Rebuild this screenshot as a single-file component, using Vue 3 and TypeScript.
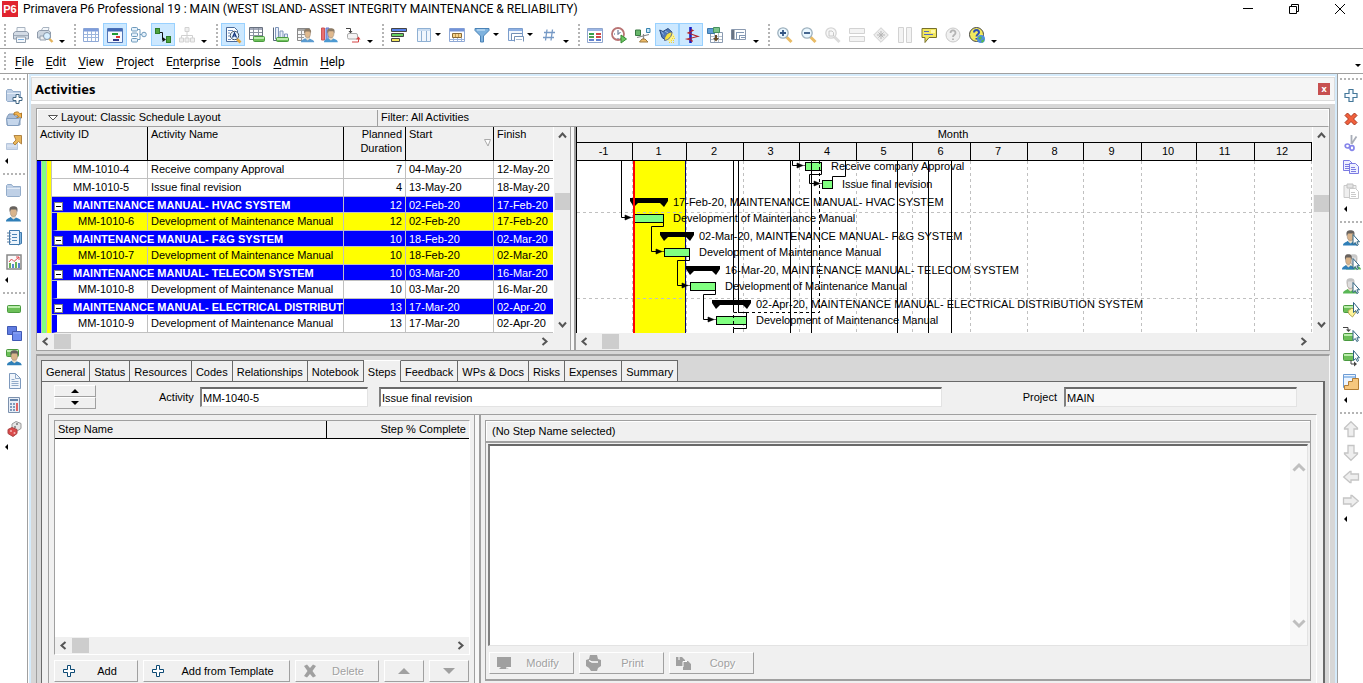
<script setup lang="ts">
import { ref } from 'vue'

interface Tool { icon: string; label: string; active?: boolean; disabled?: boolean; menu?: boolean }
interface Row { kind: 'task' | 'group'; id?: string; name: string; dur: number; start: string; finish: string; indent?: boolean; hot?: boolean }

const cursor = '<path d="M10 4.500v10l2.300-2 1.500 3 1.500-.8-1.400-2.900h2.600z" fill="#fff" stroke="#2f6380"/>'
const cursorHigh = '<path d="M10.500 .5v10l2.300-2 1.500 3 1.200-.8-1.200-2.900h2.200z" fill="#fff" stroke="#2f6380"/>'
const person = (x: number, y: number, hair: string, skin: string, shirt: string) =>
  `<g transform="translate(${x} ${y})"><path d="M0 15.500c0-3 3-3 4.500-4.500h5c1.500 1.500 5.500 1.500 5.500 4.500z" fill="${shirt}"/><path d="M5.500 9h4l.8 2.500-2.800 2-2.500-2z" fill="#e8dcc8"/><ellipse cx="7.500" cy="6" rx="3.300" ry="4.500" fill="${skin}" stroke="#8d7f74" stroke-width=".5"/><path d="M3.800 6C2.500 1 5 .3 7.500.3S12.500 1 11.200 6l-1-2.500H5z" fill="${hair}"/></g>`
const green = (x: number, y: number, w: number, h: number) =>
  `<rect x="${x + 0.5}" y="${y + 0.5}" width="${w - 1}" height="${h - 1}" rx="1" fill="#6cbf58" stroke="#4a9a3f"/><path d="M${x + 1} ${y + 2}h${w - 2}" stroke="#b9ecaa" stroke-width="2"/>`
const folder = '<path d="M.5 3.500l1-1h4l1.500 2h7.500v9l-1 1h-12l-1-1z" fill="#bfd0e6" stroke="#93acca"/><path d="M1 6.500h13" stroke="#e2ebf6"/>'
const magnifier = (rim: string, glass: string, handle: string) =>
  `<path d="M9.500 10l5 5" stroke="${handle}" stroke-width="3"/><circle cx="6" cy="6" r="5.200" fill="${glass}" stroke="${rim}" stroke-width="1.300"/>`
const sheet = (x: number, y: number, line: string, fill: string) =>
  `<path d="M${x}.5 ${y}.5h6l3 3v7h-9z" fill="${fill}" stroke="${line}"/><path d="M${x + 2} ${y + 4}.5h4M${x + 2} ${y + 6}.5h5M${x + 2} ${y + 8}.5h5" stroke="${line}"/>`

const icons: Record<string, string> = {
  print: '<path d="M4 5V.5h8V5" fill="#f5f8fb" stroke="#a9b4c1"/><path d="M.5 6l2-1.500h11l2 1.500v6h-15z" fill="#d3dbe5" stroke="#8f9bab"/><path d="M1 8.500h14" stroke="#9fabb9"/><path d="M3.500 10h9v5.500h-9z" fill="#f4f8fc" stroke="#93a0ae"/><path d="M5 12.500h6" stroke="#7cb0e4"/>',
  preview: '<path d="M4 4L6 .5h6L11 5" fill="#f5f8fb" stroke="#a9b4c1"/><path d="M.5 5l2-1.500h9l2 1.500v6h-13z" fill="#ccd5df" stroke="#8f9bab"/><path d="M3 9h6v4H3z" fill="#eee" stroke="#93a0ae"/><path d="M12 11.500l3.500 3.500" stroke="#e4b45e" stroke-width="2.400"/><circle cx="10" cy="9" r="3.500" fill="#d8efff" stroke="#8594a5"/>',
  table: '<path d="M.5 1.500h15v13H.5z" fill="#fff" stroke="#8fa9d6"/><path d="M1 3h14" stroke="#7f9ddb" stroke-width="3"/><path d="M1 7.500h14M1 10.500h14M4.500 4v10M8.500 4v10M12.500 4v10" stroke="#9db6dd"/>',
  gantt: '<path d="M.5 1.500h15v14H.5z" fill="#f4f8ff" stroke="#5176b8"/><path d="M1 3h14" stroke="#4168b4" stroke-width="3"/><path d="M5 7h6" stroke="#1f9a31" stroke-width="2"/><path d="M9 10h4" stroke="#d33" stroke-width="2"/><path d="M6 13h6" stroke="#333b86" stroke-width="2"/>',
  tree: '<path d="M6 2.500h3v10H6M9 7.500h3" fill="none" stroke="#6e9abc"/><rect x=".5" y=".5" width="6" height="3.500" rx="1" fill="#e5f1fb" stroke="#6e9abc"/><rect x=".5" y="6" width="6" height="3.500" rx="1" fill="#e5f1fb" stroke="#6e9abc"/><rect x=".5" y="11.500" width="6" height="3.500" rx="1" fill="#e5f1fb" stroke="#6e9abc"/><circle cx="13" cy="7.500" r="2.300" fill="#e5f1fb" stroke="#6e9abc"/>',
  network: '<rect x=".5" y="1.500" width="4" height="5" fill="#4fa33c" stroke="#2e7d2a"/><rect x="11.500" y="9.500" width="4" height="6" fill="#4fa33c" stroke="#2e7d2a"/><path d="M5 5.500h2.500v7H9" fill="none" stroke="#111"/><path d="M7.500 10l3.500 2.500L7.500 15z" fill="#111"/>',
  org: '<path d="M8 5v4M2.500 11V8.500h11V11M8 8v3" fill="none" stroke="#d0d0d0"/><path d="M6 .5h4v4H6zM.5 11h4v4h-4zM6 11h4v4H6zM11.500 11h4v4h-4z" fill="#efefef" stroke="#d2d2d2"/>',
  find: '<path d="M1.500.5h8l3 3v11h-11z" fill="#fff" stroke="#4a6a9a"/><path d="M3 3.500h5M3 12.500h3M3 6h2M3 9h2" stroke="#6e8fc0"/><path d="M11.500 11.500l4 4" stroke="#e3a63c" stroke-width="2.600"/><circle cx="9.500" cy="8.500" r="4.200" fill="#e8f6ff" stroke="#456"/><path d="M7.500 10.500l2-4.500 2 4.500M8.300 9h2.400" fill="none" stroke="#11337a" stroke-width="1.200"/>',
  tableBar: '<path d="M.5.500h13v12H.5z" fill="#fff" stroke="#687180"/><path d="M1 2h12" stroke="#a5abbb" stroke-width="2"/><path d="M1 5.500h12M1 8.500h12M4.500 1v11M9.500 1v11" stroke="#8a92a0"/>' + green(4, 9, 12, 6),
  chartBar: '<path d="M2.500.5h3V12h-3zM7 4h3v8H7zM11.500 7h3v5h-3z" fill="#e9effa" stroke="#7f96bb"/><path d="M.5.500v13H4" fill="none" stroke="#56667c"/>' + green(3, 10, 13, 5),
  tablePerson: '<path d="M.5 1.500h12v12H.5z" fill="#f8f8f8" stroke="#888"/><path d="M1 3h11" stroke="#a6a6a6" stroke-width="2"/><path d="M4.500 4v9M1 7.500h7M1 10.500h6" stroke="#999"/><g transform="translate(4 1.500) scale(.88)">' + person(0, 0, '#8c7a64', '#dfb98e', '#5b9bd0') + '</g>',
  chartPerson: '<path d="M.5 1h3v12h-3z" fill="#e87070" stroke="#c55"/><path d="M5 1h3v12H5z" fill="#8ba7e8" stroke="#67c"/><g transform="translate(3 1) scale(.92)">' + person(0, 0, '#8c7a64', '#dfb98e', '#4d9ad2') + '</g>',
  trace: '<path d="M1 1.500h4.500V5" fill="none" stroke="#444"/><path d="M3.500 4h4L5.500 6.500z" fill="#444"/><rect x="2.500" y="6.500" width="10" height="5.500" rx="1.500" fill="#f4f4f4" stroke="#aaa"/><path d="M7 15h6.500V11" fill="none" stroke="#d54545"/><path d="M11 12.500h4.500L13.500 9.500z" fill="#d54545"/>',
  bars: '<path d="M.5 1.500h15v3H.5z" fill="#5580e8" stroke="#444"/><path d="M.5 6.500h12v3H.5z" fill="#65cf60" stroke="#444"/><path d="M.5 11.500h8v3h-8z" fill="#f3e65d" stroke="#444"/>',
  columns: '<path d="M1.500 1.500h13v13h-13z" fill="#f0f6fd" stroke="#8fb0d3"/><path d="M5.500 2v12M10.500 2v12" stroke="#8fb0d3"/><path d="M2 3h12" stroke="#c9dcf1" stroke-width="2"/>',
  timescale: '<path d="M.5 1.500h15v13H.5z" fill="#fff" stroke="#8fa9d6"/><path d="M1 3h14" stroke="#7393d8" stroke-width="3"/><path d="M1 12.500h14M4.500 11v3M8.500 11v3M12.500 11v3" stroke="#9db6dd"/><path d="M3.500 6.500h9v4h-9z" fill="#f7d48b" stroke="#8a6b37"/><path d="M6.500 7v3M9.500 7v3" stroke="#c79a50"/>',
  filter: '<path d="M1 1.500h14v2L9.500 9v6h-3V9L1 3.500z" fill="#7eb2de" stroke="#4a82b6"/><path d="M3 3h8" stroke="#d4e9fa"/>',
  layout: '<path d="M.5 1.500h14v12H.5z" fill="#f2f7fd" stroke="#7b9dcc"/><path d="M1 3h13" stroke="#8db0e4" stroke-width="2"/><path d="M3.500 13V6.500H14M6.500 14.500v-5h9v5" fill="#fff" stroke="#7390b5"/><path d="M8 12.500h6" stroke="#a8bad2"/>',
  hash: '<path d="M6 2.500l-1.500 11M11.500 2.500l-1.500 11M3 5.500h11M2 10.500h11" stroke="#7699c5" fill="none" stroke-width="1.300"/>',
  sheetGrid: '<path d="M.5 1.500h15v14H.5z" fill="#fff" stroke="#8fa6cd"/><path d="M1 3h14" stroke="#9db7e6" stroke-width="2"/><path d="M2 7h5" stroke="#38a04a" stroke-width="2"/><path d="M9 7h5M9 10h5" stroke="#d04848" stroke-width="2"/><path d="M2 10h5" stroke="#4c9f51" stroke-width="2"/><path d="M2 13h5M9 13h5" stroke="#6483cf" stroke-width="2"/>',
  clock: '<circle cx="7" cy="7" r="6" fill="#fff" stroke="#b97474" stroke-width="1.800"/><path d="M7 3v4.500l2.500-2.500M3 7h1M7 11v1" stroke="#4c6284" fill="none"/><path d="M10 8l5.500 4-5.500 4z" fill="#6bc662" stroke="#368b35"/>',
  balance: '<path d="M.5 3h5v5.500h-5z" fill="#68b66a" stroke="#387942"/><path d="M11.500 1.500h3.500v4h-3.500z" fill="#c8e8fa" stroke="#3984b1"/><path d="M2 10.500l12-3M8.500 7v5" stroke="#888" stroke-width="1.200"/><path d="M4.500 15l2.500-3h3l3 3z" fill="#f0bd68" stroke="#9c783e"/>',
  spotlight: '<path d="M6 12l7-7 3 5-4 5.500z" fill="#fff38a"/><path d="M10 15.500h5M12 13.500h4M13 11.500h3M14 9.500h2" stroke="#ecd341" stroke-dasharray="1 1"/><path d="M.7 3L4 4.500 9 1.500l4 3.500-7 7.500-3-2z" fill="#4f79b8" stroke="#28497e"/><path d="M2.500 4.500l2 3M6 4l3 2" stroke="#9dbbe6"/><path d="M5.500 13.500c-.5-4 3-8.500 7.500-8.500 0 4-3 8-7.500 8.500z" fill="#f6e03c" stroke="#5a6d96"/>',
  progress: '<path d="M7.500 0v16" stroke="#1a1fc4" stroke-width="2.600"/><path d="M8 2.500l2 1-5 2.500 10 3.500-11 2.500 5 1.500v1.500" fill="none" stroke="#b3242c" stroke-width="1.100"/>',
  download: '<path d="M3.500 5.500h12v10h-12z" fill="#fff" stroke="#8a9ab0"/><path d="M4 9.500h11M4 12.500h11M7.500 6v9M11.500 6v9" stroke="#b4bfcc"/><path d="M.5 1.500h7v5h-7z" fill="#5e9dd6" stroke="#3e77aa"/><path d="M6.500.5h6v5h-6z" fill="#7cc48a" stroke="#46905f"/><path d="M9 8v4" stroke="#664b25" stroke-width="2"/><path d="M6 11h6l-3 3.500z" fill="#664b25"/>',
  bookmark: '<path d="M.5 2.500h14v10H.5z" fill="#fff" stroke="#8b9ab0"/><path d="M2 3v9" stroke="#687383" stroke-width="3"/><path d="M5 5.500h8M5.500 6v6M8 8.500h6M8.500 9v3M10 10.500h4" fill="none" stroke="#8398b4"/>',
  zoomIn: magnifier('#9db0bd', '#eaf7ff', '#e9bb65') + '<path d="M3 6h6M6 3v6" stroke="#345684" stroke-width="1.800"/>',
  zoomOut: magnifier('#9db0bd', '#eaf7ff', '#e9bb65') + '<path d="M3 6h6" stroke="#345684" stroke-width="1.800"/>',
  zoomFit: magnifier('#d5d5d5', '#f7f7f7', '#dcdcdc') + '<path d="M4 4h3l1.500 1.500V9H4z" fill="none" stroke="#c8c8c8"/>',
  splitH: '<path d="M.5 1.500h15v5H.5zM.5 9.500h15v5H.5z" fill="#f3f3f3" stroke="#d2d2d2"/>',
  focus: '<path d="M8 .7L15.300 8 8 15.300.7 8z" fill="#ececec" stroke="#d0d0d0"/><path d="M8 4v8M4 8h8M5.500 5.500l5 5M10.500 5.500l-5 5" stroke="#b6b6b6"/>',
  splitV: '<path d="M1.500.5h5v15h-5zM9.500.5h5v15h-5z" fill="#f3f3f3" stroke="#d2d2d2"/>',
  comment: '<path d="M1 1.500h14.500v9H8l-4 5v-5H1z" fill="#f2e75d" stroke="#77702b"/><path d="M3 4.500h5M3 7.500h9" stroke="#5569c4"/><path d="M10 3h4v3h-4z" fill="#fff8a8"/>',
  helpOff: '<circle cx="8" cy="8" r="7" fill="#f0f0f0" stroke="#cacaca"/><path d="M5.500 6c0-3.500 5-3.500 5 0C10.500 8 8 7.500 8 10M8 11.500V13" fill="none" stroke="#b4b4b4" stroke-width="1.800"/>',
  help: '<circle cx="7.500" cy="7.500" r="7" fill="#f3e95e" stroke="#444"/><path d="M5 5.500c0-3.500 5-3.500 5 0C10 7.500 7.500 7 7.500 9.500M7.500 11v1.500" fill="none" stroke="#2e4fb8" stroke-width="2"/><circle cx="12" cy="12" r="4" fill="#4f8fdf"/><path d="M9 11l3-2 1 2-2 2zM12 14l3-2v2l-2 2z" fill="#57bb4c"/>',
  folderAdd: folder + '<path d="M10 7.500h3v3h3v3h-3v3h-3v-3H7v-3h3z" fill="#fff" stroke="#426783"/>',
  folderOpen: '<path d="M1 6L3 3h5l1 2h5v9H1z" fill="#a9bdd8" stroke="#829bba"/><path d="M8 2c3-2 5-1 6 1l1.500-1v5h-5l2-1.500C11 3.500 10 3.500 8 4z" fill="#f5b54d" stroke="#b27a29"/><path d="M.5 7.500h11l3-1-2 8H1.500z" fill="#c5d6eb" stroke="#819dbf"/>',
  folderClose: '<path d="M.5 8.500h11v6H.5z" fill="#ccd8ea" stroke="#b6c6dc"/><path d="M1 11h10" stroke="#e4ecf6"/><path d="M8 .5h7.500V9l-3-2.500L9 10l-2-2 3-3z" fill="#e8b65a" stroke="#b28545"/>',
  folder,
  user: person(0, 0, '#67625e', '#d9b48b', '#2f7fb8'),
  book: '<path d="M12 2.500h3.500v11L12 15" fill="#82b7e1" stroke="#3f79ac"/><path d="M3.500.5h10v14h-10z" fill="#edf5fc" stroke="#3f79ac"/><path d="M6 4.500h5M6 7.500h5M6 10.500h5" stroke="#4b84b7"/><path d="M1 3h4M1 6h4M1 9h4M1 12h4" stroke="#56799d"/>',
  report: '<path d="M1 1h14v14H1z" fill="#fafafa" stroke="#888" stroke-width="1.500"/><path d="M3 8l2.500-3L8 7.500 13 3M10 3h3v3" fill="none" stroke="#df4c50"/><path d="M4 9v5M10 8v6" stroke="#67b454" stroke-width="2"/><path d="M7 10v4M13 9v5" stroke="#5887cb" stroke-width="2"/>',
  task: green(1, 4, 14, 8),
  windows: '<path d="M1.500 1.500h9v8h-9z" fill="#5f7be0" stroke="#4059b3"/><path d="M6.500 6.500h9v9h-9z" fill="#6f8df0" stroke="#4059b3"/><path d="M7 8h8" stroke="#93a9f5"/>',
  taskUser: green(0, 0, 13, 8) + '<g transform="translate(1 1) scale(.98)">' + person(0, 0, '#67625e', '#d9b48b', '#2f7fb8') + '</g>',
  document: '<path d="M3.500.5h6l5 5v10h-11z" fill="#f0f5fb" stroke="#7d99bd"/><path d="M9.500.5v5h5M5.500 6.500h3M5.500 8.500h7M5.500 10.500h7M5.500 12.500h7" fill="none" stroke="#91aac9"/>',
  calc: '<path d="M2.500.5h11v15h-11z" fill="#e7eef7" stroke="#7b90ad"/><path d="M4 3h8" stroke="#6684aa" stroke-width="2"/><path d="M4 7h5M4 10h5M4 13h5" stroke="#7f9abb" stroke-width="2" stroke-dasharray="2 1"/><path d="M11 6v8" stroke="#e16262" stroke-width="2"/>',
  risk: '<path d="M6 3l4-2.500 5 2v5l-4 2.500-5-2z" fill="#e5e5e5" stroke="#999"/><circle cx="11" cy="3" r="1" fill="#777"/><circle cx="9" cy="6" r="1" fill="#777"/><path d="M2 8.500l4-2 5 2v4l-4 3-5-3z" fill="#da4b4b" stroke="#a94343"/><circle cx="5" cy="10" r="1" fill="#f3b5b5"/><circle cx="8.500" cy="12" r="1" fill="#f3b5b5"/>',
  plus: '<path d="M6 2.500h4v4h4v4h-4v4H6v-4H2v-4h4z" fill="#f7fbff" stroke="#447799" stroke-width="1.200"/>',
  cross: '<path d="M2 4.500L4.500 2 8 5.500 11.500 2 14 4.500 10.500 8l3.500 3.500-2.500 2.500L8 10.500 4.500 14 2 11.500 5.500 8z" fill="#f2603c" stroke="#a9361d"/>',
  scissors: '<path d="M8.500 0v9M13.500 1.500L8.500 9" stroke="#a9aeb8" stroke-width="1.800"/><ellipse cx="4.500" cy="11" rx="2.300" ry="2" fill="none" stroke="#8585ea" stroke-width="1.700"/><ellipse cx="9" cy="13" rx="2" ry="2.300" fill="none" stroke="#8585ea" stroke-width="1.700"/>',
  copy: sheet(0, 1, '#7b7be2', '#eef0ff') + sheet(6, 4, '#7b7be2', '#eef0ff'),
  paste: '<path d="M1 2.500h12v12H1z" fill="#efefef" stroke="#cacaca"/><path d="M4 1h6v4H4z" fill="#e3e3e3" stroke="#c2c2c2"/>' + sheet(6, 5, '#cacaca', '#fff'),
  pickUser: person(0, 0, '#67625e', '#d9b48b', '#2f7fb8') + cursor,
  pickUsers: '<g transform="translate(3 0)">' + person(0, 0, '#c9c9c9', '#ddd', '#59b756') + '</g><g transform="translate(-1 0) scale(.85 1)">' + person(0, 0, '#67625e', '#d9b48b', '#2f7fb8') + '</g>' + cursor,
  pickRole: person(0, 0, '#c3c3c3', '#dedede', '#59b756') + cursor,
  pickCode: green(0, 3, 11, 8) + '<path d="M5 9l4-3 4 4-3.500 5L6 12z" fill="#fff59a" stroke="#b5a957"/>' + cursorHigh,
  pickPred: '<path d="M0 1.500h5V4" fill="none" stroke="#444"/><path d="M3 3.500h5L5.500 6z" fill="#444"/>' + green(0, 7, 11, 8) + cursor,
  pickSucc: green(0, 3, 11, 8) + '<path d="M8 10v4h4" fill="none" stroke="#444"/><path d="M11 11.500l3 2.500-3 2.500z" fill="#444"/>' + cursorHigh,
  steps: '<path d="M.5.500h12v13H.5z" fill="#edf5ff" stroke="#6d9bd3"/><path d="M1 3h11" stroke="#9dc3ed" stroke-width="2"/><path d="M1.500 15.500v-4h4v-4h4v-3h6v11z" fill="#f6c77e" stroke="#b27d35"/>',
  up: '<path d="M8 .7L14.500 7v1H11v7.500H5V8H1.500V7z" fill="#eee" stroke="#c5c5c5" stroke-width="1.300"/>',
  down: '<path d="M8 15.300L14.500 9V8H11V.5H5V8H1.500v1z" fill="#eee" stroke="#c5c5c5" stroke-width="1.300"/>',
  left: '<path d="M.7 8L7 2.500h1V5h7.500v6H8v2.500H7z" fill="#eee" stroke="#c5c5c5" stroke-width="1.300"/>',
  right: '<path d="M15.300 8L9 2.500H8V5H.5v6H8v2.500h1z" fill="#eee" stroke="#c5c5c5" stroke-width="1.300"/>',
  addBtn: '<path d="M6.500 2.500h3v4h4v3h-4v4h-3v-4h-4v-3h4z" fill="#fff" stroke="#0d4a75"/>',
  deleteBtn: '<path d="M2 3l3-1.500L8 5l3-3.500L14 3l-3.500 5 3.500 5-3 1.500L8 11l-3 3.500L2 13l3.500-5z" fill="#a0a0a0"/>',
  modifyBtn: '<path d="M1 2h14v10H10l3 2H3l2-2H1z" fill="#a0a0a0"/><path d="M10 13h5" stroke="#fff"/>',
  printBtn: '<path d="M4 0h7l1 4 3 1v6l-3 2-1 3H5l-2-3-3-2V5l3-1z" fill="#a0a0a0"/><path d="M3 5.500l3 1.500h6" stroke="#fff" fill="none" stroke-width="1.300"/>',
  copyBtn: '<path d="M0 2h6l3 3v6H0zM7 6h5l3 3v6H7z" fill="#a0a0a0"/><path d="M7 12V6.500h4M3 2v3" stroke="#fff" fill="none"/>',
}

const toolbars: Tool[][] = [
  [{ icon: 'print', label: 'Print' }, { icon: 'preview', label: 'Print Preview' }],
  [{ icon: 'table', label: 'Activity Table' }, { icon: 'gantt', label: 'Gantt Chart', active: true }, { icon: 'tree', label: 'Activity Usage' }, { icon: 'network', label: 'Relationship Lines', active: true }, { icon: 'org', label: 'WBS', disabled: true }],
  [{ icon: 'find', label: 'Details', active: true }, { icon: 'tableBar', label: 'Activity Usage Spreadsheet' }, { icon: 'chartBar', label: 'Activity Usage Profile' }, { icon: 'tablePerson', label: 'Resource Usage Spreadsheet' }, { icon: 'chartPerson', label: 'Resource Usage Profile' }, { icon: 'trace', label: 'Trace Logic' }],
  [{ icon: 'bars', label: 'Bars' }, { icon: 'columns', label: 'Columns', menu: true }, { icon: 'timescale', label: 'Timescale' }, { icon: 'filter', label: 'Filters', menu: true }, { icon: 'layout', label: 'Group and Sort', menu: true }, { icon: 'hash', label: 'Renumber' }],
  [{ icon: 'sheetGrid', label: 'Spreadsheet' }, { icon: 'clock', label: 'Schedule' }, { icon: 'balance', label: 'Level Resources' }, { icon: 'spotlight', label: 'Progress Spotlight', active: true }, { icon: 'progress', label: 'Progress Line', active: true }, { icon: 'download', label: 'Store Period Performance' }, { icon: 'bookmark', label: 'Layouts' }],
  [{ icon: 'zoomIn', label: 'Zoom In' }, { icon: 'zoomOut', label: 'Zoom Out' }, { icon: 'zoomFit', label: 'Zoom to Fit', disabled: true }, { icon: 'splitH', label: 'Split Horizontally', disabled: true }, { icon: 'focus', label: 'Focus', disabled: true }, { icon: 'splitV', label: 'Split Vertically', disabled: true }, { icon: 'comment', label: 'Comments' }, { icon: 'helpOff', label: 'Context Help', disabled: true }, { icon: 'help', label: 'Online Help' }],
]
const leftBars: string[][] = [
  ['folderAdd', 'folderOpen', 'folderClose'],
  ['folder', 'user', 'book', 'report'],
  ['task', 'windows', 'taskUser', 'document', 'calc', 'risk'],
]
const rightBars: string[][] = [
  ['plus', 'cross', 'scissors', 'copy', 'paste'],
  ['pickUser', 'pickUsers', 'pickRole', 'pickCode', 'pickPred', 'pickSucc', 'steps'],
  ['up', 'down', 'left', 'right'],
]
const menus = ['File', 'Edit', 'View', 'Project', 'Enterprise', 'Tools', 'Admin', 'Help']
const accel: Record<string, number> = { Enterprise: 1 }

const rows: Row[] = [
  { kind: 'task', id: 'MM-1010-4', name: 'Receive company Approval', dur: 7, start: '04-May-20', finish: '12-May-20' },
  { kind: 'task', id: 'MM-1010-5', name: 'Issue final revision', dur: 4, start: '13-May-20', finish: '18-May-20' },
  { kind: 'group', name: 'MAINTENANCE MANUAL- HVAC SYSTEM', dur: 12, start: '02-Feb-20', finish: '17-Feb-20' },
  { kind: 'task', id: 'MM-1010-6', name: 'Development of Maintenance Manual', dur: 12, start: '02-Feb-20', finish: '17-Feb-20', indent: true, hot: true },
  { kind: 'group', name: 'MAINTENANCE MANUAL- F&G SYSTEM', dur: 10, start: '18-Feb-20', finish: '02-Mar-20' },
  { kind: 'task', id: 'MM-1010-7', name: 'Development of Maintenance Manual', dur: 10, start: '18-Feb-20', finish: '02-Mar-20', indent: true, hot: true },
  { kind: 'group', name: 'MAINTENANCE MANUAL- TELECOM SYSTEM', dur: 10, start: '03-Mar-20', finish: '16-Mar-20' },
  { kind: 'task', id: 'MM-1010-8', name: 'Development of Maintenance Manual', dur: 10, start: '03-Mar-20', finish: '16-Mar-20', indent: true },
  { kind: 'group', name: 'MAINTENANCE MANUAL- ELECTRICAL DISTRIBUTION SYSTEM', dur: 13, start: '17-Mar-20', finish: '02-Apr-20' },
  { kind: 'task', id: 'MM-1010-9', name: 'Development of Maintenance Manual', dur: 13, start: '17-Mar-20', finish: '02-Apr-20', indent: true },
]

/* Chart geometry: x runs along the time axis from the left edge of the chart, y from its top. */
const months = [
  { label: '-1', w: 56 }, { label: '1', w: 54 }, { label: '2', w: 57 }, { label: '3', w: 56 }, { label: '4', w: 57 },
  { label: '5', w: 56 }, { label: '6', w: 58 }, { label: '7', w: 57 }, { label: '8', w: 56 }, { label: '9', w: 58 },
  { label: '10', w: 55 }, { label: '11', w: 58 }, { label: '12', w: 57 },
]
const gridX = months.map((_, i) => months.slice(0, i + 1).reduce((s, m) => s + m.w, 0) - 1)
const bars = [
  { x: 228, y: 1, w: 17 }, { x: 245, y: 19, w: 11 }, { x: 57, y: 53, w: 30 },
  { x: 87, y: 87, w: 26 }, { x: 113, y: 121, w: 26 }, { x: 139, y: 155, w: 31 },
]
const summaries = [
  { x: 53, y: 37, w: 38 }, { x: 83, y: 71, w: 34 }, { x: 109, y: 105, w: 34 }, { x: 135, y: 139, w: 39 },
]
const barLabels = [
  { x: 254, y: 9, t: 'Receive company Approval' }, { x: 265, y: 27, t: 'Issue final revision' },
  { x: 96, y: 45, t: '17-Feb-20, MAINTENANCE MANUAL- HVAC SYSTEM' }, { x: 96, y: 61, t: 'Development of Maintenance Manual' },
  { x: 122, y: 79, t: '02-Mar-20, MAINTENANCE MANUAL- F&G SYSTEM' }, { x: 122, y: 95, t: 'Development of Maintenance Manual' },
  { x: 148, y: 113, t: '16-Mar-20, MAINTENANCE MANUAL- TELECOM SYSTEM' }, { x: 148, y: 129, t: 'Development of Maintenance Manual' },
  { x: 179, y: 147, t: '02-Apr-20, MAINTENANCE MANUAL- ELECTRICAL DISTRIBUTION SYSTEM' }, { x: 179, y: 163, t: 'Development of Maintenance Manual' },
]
const links = [
  'M44.500 0V56.500H50', 'M86.500 62V65.500H74.500V90.500H80', 'M112.500 96V99.500H100.500V124.500H106', 'M138.500 130V133.500H126.500V158.500H132',
  'M169.500 164V167.500H156.500V172', 'M156.500 0V151.500', 'M161.500 0V151.500M169.500 155V151.500H161', 'M213.500 0V172', 'M234.500 0V172',
  'M320.500 0V172', 'M351.500 0V172', 'M374.500 0V172', 'M215.500 0V4.500H221', 'M244.500 10V13.500H232.500V22.500H238', 'M268.500 0V15.500H255.500V19',
]
const arrows = [[56, 56.5], [87, 90.5], [113, 124.5], [139, 158.5], [228, 4.5], [245, 22.5]]

const tabs = ['General', 'Status', 'Resources', 'Codes', 'Relationships', 'Notebook', 'Steps', 'Feedback', 'WPs & Docs', 'Risks', 'Expenses', 'Summary']
const activeTab = ref('Steps')
const activityId = ref('MM-1040-5')
const activityName = ref('Issue final revision')
const project = ref('MAIN')
const stepText = ref('')
</script>

<template>
  <div class="app">
    <header class="titlebar">
      <span class="logo">P6</span>
      <span class="title">Primavera P6 Professional 19 : MAIN (WEST ISLAND- ASSET INTEGRITY MAINTENANCE &amp; RELIABILITY)</span>
      <div class="winbtns">
        <button aria-label="Minimize"><svg width="12" height="12"><path d="M1 5.500h10" stroke="#000" /></svg></button>
        <button aria-label="Restore"><svg width="12" height="12"><path d="M1.500 3.500h7v7h-7zM3.500 3V1.500h7v7H9" fill="none" stroke="#000" /></svg></button>
        <button aria-label="Close"><svg width="12" height="12"><path d="M1 1l10 10M11 1L1 11" stroke="#000" /></svg></button>
      </div>
    </header>

    <div class="toolbar">
      <div v-for="(bar, i) in toolbars" :key="i" class="toolgroup">
        <span class="grip"></span>
        <button v-for="t in bar" :key="t.icon" class="tool" :class="{ active: t.active, wide: t.menu }" :disabled="t.disabled" :aria-label="t.label">
          <svg width="16" height="16" viewBox="0 0 16 16" v-html="icons[t.icon]"></svg>
          <span v-if="t.menu" class="caret"></span>
        </button>
        <button class="more" aria-label="Toolbar options"><span class="caret"></span></button>
      </div>
    </div>

    <nav class="menubar">
      <span class="grip"></span>
      <button v-for="m in menus" :key="m">{{ m.slice(0, accel[m] ?? 0) }}<u>{{ m.charAt(accel[m] ?? 0) }}</u>{{ m.slice((accel[m] ?? 0) + 1) }}</button>
      <span class="caret end"></span>
    </nav>

    <div class="body">
      <aside class="side left">
        <div v-for="(bar, i) in leftBars" :key="i" class="sidegroup">
          <span class="hgrip"></span>
          <button v-for="n in bar" :key="n" :aria-label="n"><svg width="16" height="16" viewBox="0 0 16 16" v-html="icons[n]"></svg></button>
          <span class="sidemore"></span>
        </div>
      </aside>

      <main class="main">
        <div class="pagehead">
          <h1>Activities</h1>
          <button class="close" aria-label="Close Activities">x</button>
        </div>

        <div class="work">
          <section class="upper">
            <div class="layoutbar">
              <button class="layoutname"><svg width="10" height="7"><path d="M.5 1.500h9L5 6z" fill="#fff" stroke="#555" /></svg>Layout: Classic Schedule Layout</button>
              <span class="filtername">Filter: All Activities</span>
            </div>
            <div class="panes">
              <div class="pane tablepane">
                <div class="scrollarea">
                  <table class="acts">
                    <colgroup><col class="c-band"><col class="c-id"><col class="c-name"><col class="c-dur"><col class="c-start"><col class="c-finish"></colgroup>
                    <thead>
                      <tr>
                        <th colspan="2">Activity ID</th><th>Activity Name</th><th class="num">Planned Duration</th>
                        <th><div class="sorted">Start<svg width="8" height="8"><path d="M.5.500h6L4 7z" fill="#fff" stroke="#aaa" /></svg></div></th><th>Finish</th>
                      </tr>
                    </thead>
                    <tbody>
                      <tr v-for="(r, i) in rows" :key="i" :class="[r.kind, { indent: r.indent, hot: r.hot }]">
                        <td class="band"></td>
                        <td v-if="r.kind === 'group'" colspan="2" class="gname"><button class="fold" aria-label="Collapse"></button><span>{{ r.name }}</span></td>
                        <template v-else><td class="id">{{ r.id }}</td><td>{{ r.name }}</td></template>
                        <td class="num">{{ r.dur }}</td><td>{{ r.start }}</td><td>{{ r.finish }}</td>
                      </tr>
                    </tbody>
                  </table>
                  <div class="vscroll">
                    <svg width="9" height="7"><path d="M1 5.500l3.500-4 3.500 4" /></svg><span class="thumb"></span><svg width="9" height="7"><path d="M1 1.500l3.500 4 3.500-4" /></svg>
                  </div>
                </div>
                <div class="hscroll corner">
                  <svg width="7" height="9"><path d="M5.500 1l-4 3.500 4 3.500" /></svg><span class="thumb"></span><svg width="7" height="9"><path d="M1.500 1l4 3.500-4 3.500" /></svg>
                </div>
              </div>

              <div class="vsplit"></div>

              <div class="pane chartpane">
                <div class="scrollarea">
                  <div class="chart">
                    <div class="monthtitle">Month</div>
                    <div class="months"><span v-for="m in months" :key="m.label" :style="{ flexGrow: m.w }">{{ m.label }}</span></div>
                    <svg class="bars" width="735" height="172" viewBox="0 0 735 172">
                      <rect x="57" y="0" width="51" height="172" fill="#ff0" />
                      <g stroke="#c0c0c0" stroke-dasharray="3 3" fill="none">
                        <path v-for="x in gridX" :key="x" :d="`M${x}.5 0V172`" />
                        <path d="M0 51.500H735M0 137.500H735" />
                      </g>
                      <path d="M108.500 0V172" stroke="#000080" />
                      <g fill="#80ff80" stroke="#000"><rect v-for="b in bars" :key="b.y" :x="b.x + 0.5" :y="b.y + 0.5" :width="b.w - 1" height="8" /></g>
                      <path v-for="s in summaries" :key="s.y" :d="`M${s.x} ${s.y}h${s.w}v3l-4 6-4-4h${16 - s.w}l-4 4-4-6z`" />
                      <text v-for="l in barLabels" :key="l.y" :x="l.x" :y="l.y">{{ l.t }}</text>
                      <path d="M57 0V172" stroke="#f00" stroke-width="2" />
                      <path v-for="d in links" :key="d" :d="d" fill="none" stroke="#000" />
                      <path d="M242.500 0V151.500H156.500V167" fill="none" stroke="#000" stroke-dasharray="3 3" />
                      <path v-for="a in arrows" :key="a[1]" :d="`M${a[0]} ${a[1]}h-2l-6-2.500v5l6-2.500`" stroke="#000" stroke-width=".6" />
                    </svg>
                  </div>
                  <div class="vscroll low">
                    <svg width="9" height="7"><path d="M1 5.500l3.500-4 3.500 4" /></svg><span class="thumb"></span><svg width="9" height="7"><path d="M1 1.500l3.500 4 3.500-4" /></svg>
                  </div>
                </div>
                <div class="hscroll corner">
                  <svg width="7" height="9"><path d="M5.500 1l-4 3.500 4 3.500" /></svg><span class="thumb"></span><svg width="7" height="9"><path d="M1.500 1l4 3.500-4 3.500" /></svg>
                </div>
              </div>
            </div>
          </section>

          <section class="lower">
            <div class="tabs" role="tablist">
              <button v-for="t in tabs" :key="t" role="tab" :aria-selected="t === activeTab" :class="{ on: t === activeTab }" @click="activeTab = t">{{ t }}</button>
            </div>
            <div class="detail">
              <div class="fields">
                <div class="spin">
                  <button aria-label="Previous activity"><svg width="8" height="4"><path d="M0 4l4-4 4 4z" /></svg></button>
                  <button aria-label="Next activity"><svg width="8" height="4"><path d="M0 0l4 4 4-4z" /></svg></button>
                </div>
                <label class="l-act" for="act-id">Activity</label>
                <input id="act-id" v-model="activityId" class="i-id">
                <input v-model="activityName" class="i-name" aria-label="Activity name">
                <label class="l-proj" for="proj">Project</label>
                <input id="proj" v-model="project" class="i-proj" readonly>
              </div>
              <div class="split">
                <div class="stepspane">
                  <div class="stepbox">
                    <table class="steps"><thead><tr><th>Step Name</th><th class="num">Step % Complete</th></tr></thead></table>
                    <div class="blank"></div>
                    <div class="hscroll">
                      <svg width="7" height="9"><path d="M5.500 1l-4 3.500 4 3.500" /></svg><span class="thumb"></span><svg width="7" height="9"><path d="M1.500 1l4 3.500-4 3.500" /></svg>
                    </div>
                  </div>
                  <div class="buttons">
                    <button class="btn"><svg width="16" height="16" v-html="icons.addBtn"></svg><span>Add</span></button>
                    <button class="btn big"><svg width="16" height="16" v-html="icons.addBtn"></svg><span>Add from Template</span></button>
                    <button class="btn" disabled><svg width="16" height="16" v-html="icons.deleteBtn"></svg><span>Delete</span></button>
                    <button class="btn small" disabled aria-label="Move up"><svg width="12" height="6"><path d="M0 6l6-6 6 6z" fill="#a0a0a0" /></svg></button>
                    <button class="btn small" disabled aria-label="Move down"><svg width="12" height="6"><path d="M0 0l6 6 6-6z" fill="#a0a0a0" /></svg></button>
                  </div>
                </div>
                <div class="lsplit"></div>
                <div class="notepane">
                  <div class="notehead">(No Step Name selected)</div>
                  <div class="notebody">
                    <div class="editor">
                      <textarea v-model="stepText" aria-label="Step description"></textarea>
                      <div class="offscroll"><svg width="14" height="9"><path d="M1.500 7.500L7 2l5.500 5.500" /></svg><svg width="14" height="9"><path d="M1.500 1.500L7 7l5.500-5.500" /></svg></div>
                    </div>
                    <div class="buttons">
                      <button class="btn" disabled><svg width="16" height="16" v-html="icons.modifyBtn"></svg><span>Modify</span></button>
                      <button class="btn" disabled><svg width="16" height="16" v-html="icons.printBtn"></svg><span>Print</span></button>
                      <button class="btn" disabled><svg width="16" height="16" v-html="icons.copyBtn"></svg><span>Copy</span></button>
                    </div>
                  </div>
                </div>
              </div>
            </div>
          </section>
        </div>
      </main>

      <aside class="side right">
        <div v-for="(bar, i) in rightBars" :key="i" class="sidegroup">
          <span class="hgrip"></span>
          <button v-for="n in bar" :key="n" :aria-label="n"><svg width="16" height="16" viewBox="0 0 16 16" v-html="icons[n]"></svg></button>
          <span class="sidemore"></span>
        </div>
      </aside>
    </div>
  </div>
</template>

<style>
body { margin: 0; overflow: hidden; background: #fff; }
</style>

<style scoped>
* { box-sizing: border-box; }
.app { display: flex; flex-direction: column; height: 100vh; font: 11px/14px "Liberation Sans", Arial, sans-serif; color: #000; background: #fff; }
button, input, textarea { font: inherit; color: inherit; margin: 0; padding: 0; border: 0; background: none; border-radius: 0; outline: 0; }
svg { display: block; flex: none; overflow: visible; }

.titlebar { display: flex; align-items: center; height: 20px; flex: none; padding: 0 0 2px 2px; }
.logo { width: 16px; height: 16px; background: #e0242f; color: #fff; font: bold 11px/16px "Liberation Sans", sans-serif; text-align: center; }
.title { margin-left: 5px; font: 12px/18px Roboto, "Noto Sans", sans-serif; white-space: nowrap; }
.winbtns { display: flex; margin-left: auto; }
.winbtns button { width: 46px; height: 18px; display: grid; place-items: center; }

.toolbar { display: flex; height: 29px; flex: none; border-bottom: 1px solid #a0a0a0; padding: 3px 0 2px; }
.toolgroup { display: flex; }
.grip { flex: none; width: 12px; background: radial-gradient(circle at 1px 1px, #b4b4b4 1px, transparent 1px) 7px 1px / 4px 4px repeat-y; }
.toolgroup:first-child .grip { width: 9px; background-position: 4px 1px; }
.tool { width: 24px; display: flex; align-items: center; justify-content: center; border: 1px solid transparent; }
.tool.wide { width: 34px; gap: 3px; }
.tool.active { background: #cce8ff; border-color: #99d1ff; }
.caret { width: 0; height: 0; border: 3px solid transparent; border-top-color: #000; border-bottom: 0; flex: none; }
.more { width: 10px; display: flex; align-items: flex-end; justify-content: center; padding-bottom: 3px; }

.menubar { display: flex; align-items: stretch; height: 25px; flex: none; border-bottom: 1px solid #a0a0a0; padding: 3px 2px 2px 0; gap: 12px; font: 12px/20px Roboto, "Noto Sans", sans-serif; }
.menubar .grip { width: 9px; background-position: 4px 0; margin-right: -6px; }
.menubar .end { margin: 12px 0 0 auto; }
u { text-underline-offset: 2px; }

.body { display: flex; flex: 1; min-height: 0; }
.side { flex: none; width: 28px; }
.side.left { border-right: 1px solid #a0a0a0; }
.side.right { width: 26px; border-left: 1px solid #a0a0a0; padding-left: 1px; }
.sidegroup { display: flex; flex-direction: column; align-items: center; }
.hgrip { height: 12px; width: 22px; background: radial-gradient(circle at 1px 1px, #b4b4b4 1px, transparent 1px) 0 7px / 4px 4px repeat-x; }
.sidegroup:first-child .hgrip { height: 9px; background-position: 0 4px; }
.sidegroup button { width: 24px; height: 24px; display: grid; place-items: center; }
.sidemore { align-self: flex-start; margin: 3px 0 2px 5px; border: 3px solid transparent; border-right-color: #000; border-left: 0; }

.main { flex: 1; min-width: 0; display: flex; flex-direction: column; margin-left: 1px; border: 2px solid #d5ebfb; border-bottom: 0; }
.pagehead { height: 24px; flex: none; margin: 1px 0 3px; border: 1px solid #dcdcdc; background: #f5f5f5; display: flex; align-items: center; justify-content: space-between; padding: 0 4px 1px 3px; }
h1 { margin: 0; font: bold 13px/18px "Open Sans", "Noto Sans", sans-serif; }
.close { width: 12px; height: 12px; background: #c75050; color: #fff; font: bold 9px/10px "Open Sans", sans-serif; }

.work { flex: 1; min-height: 0; background: #d7d7d7; padding: 4px 5px 0; display: flex; flex-direction: column; }
.upper { flex: none; border: 1px solid #a0a0a0; background: #f0f0f0; display: flex; flex-direction: column; }
.layoutbar { display: flex; height: 18px; line-height: 15px; border: 1px solid #fff; border-bottom: 1px solid #a0a0a0; }
.layoutname { display: flex; align-items: center; width: 340px; gap: 3px; padding: 0 0 1px 10px; border-right: 1px solid #a0a0a0; }
.filtername { padding-left: 3px; }
.panes { display: flex; }
.pane { display: flex; flex-direction: column; }
.tablepane { width: 533px; flex: none; }
.vsplit { flex: none; width: 6px; border-left: 1px solid #a0a0a0; border-right: 2px solid #a0a0a0; background: #f8f8f8; }
.chartpane { flex: 1; min-width: 0; }
.scrollarea { display: flex; }

.acts { border-collapse: separate; border-spacing: 0; table-layout: fixed; width: 516px; flex: none; background: #fff; }
.c-band { width: 15px; } .c-id { width: 96px; } .c-name { width: 196px; } .c-dur { width: 62px; } .c-start { width: 88px; } .c-finish { width: 59px; }
th { font-weight: normal; text-align: left; vertical-align: top; background: #f0f0f0; }
.acts th { height: 34px; padding: 0 3px; border-right: 1px solid #000; border-bottom: 1px solid #000; }
.acts th:last-child { border-right: 0; }
.sorted { display: flex; justify-content: space-between; }
.sorted svg { margin: 12px -2px 0 0; }
.acts .num { text-align: right; padding-right: 3px; }
.acts td { padding: 1px 3px 0; height: 18px; vertical-align: top; line-height: 14px; border-right: 1px solid #c0c0c0; border-bottom: 1px solid #c0c0c0; white-space: nowrap; overflow: hidden; }
.acts td:last-child { border-right: 0; }
.acts td.band { padding: 0; border: 0; background: linear-gradient(90deg, #00f 4px, #c0c0c0 4px 5px, #80ff80 5px 9px, #c0c0c0 9px 10px, #ff0 10px 14px, #c0c0c0 14px); }
.acts td.id { padding-left: 21px; }
.indent td.id { border-left: 5px solid #00f; }
.hot td { background: #ff0; }
.group td { height: 16px; background: #00f; color: #fff; }
.acts td.gname { padding-left: 2px; font-weight: bold; }
.gname span { margin-left: 10px; }
.fold { width: 9px; height: 9px; vertical-align: -1px; border: 1px solid #808080; background: linear-gradient(#000, #000) center / 5px 1px no-repeat #fff; }

.vscroll { flex: none; width: 17px; background: #f0f0f0; border-left: 1px solid #fff; display: flex; flex-direction: column; align-items: center; padding: 5px 0; }
.vscroll .thumb { width: 15px; height: 17px; margin: 54px 0 auto; background: #cdcdcd; }
.vscroll.low .thumb { margin-top: 56px; }
.hscroll { display: flex; align-items: center; height: 17px; background: #f0f0f0; padding: 0 5px; }
.hscroll .thumb { width: 17px; height: 15px; margin: 0 auto 0 5px; background: #cdcdcd; }
.hscroll.corner { padding-right: 22px; }
.chartpane .thumb { margin-left: 14px; }
.chartpane .vscroll .thumb { margin-left: 0; }
.vscroll path, .hscroll path { fill: none; stroke: #555; stroke-width: 2; }

.chart { flex: 1; min-width: 0; border-left: 1px solid #000; background: #fff; }
.monthtitle { height: 16px; border-bottom: 1px solid #000; background: #f0f0f0; text-align: center; padding-left: 17px; }
.months { display: flex; height: 18px; background: #f0f0f0; border-bottom: 1px solid #000; max-width: 735px; }
.months span { flex: 1 1 0; border-right: 1px solid #000; text-align: center; line-height: 17px; padding-right: 2px; }
.bars { overflow: hidden; }
.bars text { font: 11px "Liberation Sans", Arial, sans-serif; }

.lower { flex: 1; min-height: 0; margin-top: 3px; border: 1px solid #a0a0a0; border-width: 2px 1px 0; border-right-color: #f8f8f8; padding: 4px 4px 0; display: flex; flex-direction: column; }
.tabs { display: flex; flex: none; height: 21px; border-left: 1px solid #696969; align-self: flex-start; position: relative; }
.tabs button { padding: 2px 4px 0; border: 1px solid #696969; border-left: 0; border-bottom: 0; background: #f0f0f0; }
.tabs button.on { margin-bottom: -1px; padding-bottom: 1px; border-top-color: #fff; background: #f0f0f0; }
.detail { flex: 1; min-height: 0; display: flex; flex-direction: column; background: #f0f0f0; border: 1px solid #696969; border-right-width: 2px; border-bottom: 0; }
.fields { display: flex; align-items: center; flex: none; height: 30px; padding: 0 26px 0 12px; }
.spin { width: 42px; }
.spin button { width: 42px; height: 12px; display: grid; place-items: center; border: 1px solid #a0a0a0; border-top-color: #fff; border-left-color: #fff; }
.l-act { margin: 0 4px 0 63px; width: 37px; }
.fields input { height: 20px; padding: 0 1px; background: #fff; border: 1px solid #e3e3e3; border-top: 2px solid #696969; border-left: 2px solid #808080; }
.i-id { width: 168px; flex: none; }
.i-name { flex: 1; min-width: 0; margin-left: 11px; }
.l-proj { margin: 0 7px 0 81px; }
.fields .i-proj { width: 233px; flex: none; background: #f8f8f8; }
.split { flex: 1; min-height: 0; margin: 2px 6px 0; display: flex; border-top: 1px solid #a0a0a0; border-left: 1px solid #a0a0a0; border-right: 1px solid #fff; }
.stepspane { width: 425px; flex: none; padding: 5px 4px 1px 5px; display: flex; flex-direction: column; }
.stepbox { flex: 1; min-height: 0; display: flex; flex-direction: column; border: 1px solid #a0a0a0; border-right-color: #fff; border-bottom-color: #fff; }
.steps { width: 100%; border-collapse: separate; border-spacing: 0; table-layout: fixed; }
.steps th { height: 18px; padding: 0 3px 2px; vertical-align: middle; border-bottom: 1px solid #000; }
.steps th:first-child { width: 272px; border-right: 1px solid #000; }
.steps .num { text-align: right; }
.blank { flex: 1; background: #fff; }
.buttons { display: flex; gap: 5px; flex: none; }
.stepspane .buttons { margin-top: 5px; }
.btn { width: 85px; height: 22px; padding: 0 0 0 6px; display: flex; align-items: center; border: 1px solid #a0a0a0; border-top-color: #fff; border-left-color: #fff; background: #f0f0f0; }
.btn span { flex: 1; text-align: center; }
.btn:disabled { color: #a0a0a0; text-shadow: 1px 1px #fff; }
.stepspane .btn { width: 84px; }
.stepspane .btn.big { width: 147px; }
.stepspane .btn.small { width: 40px; padding: 0; justify-content: center; }
.lsplit { flex: none; width: 7px; border-left: 1px solid #a0a0a0; border-right: 2px solid #a0a0a0; background: #f8f8f8; }
.notepane { flex: 1; min-width: 0; padding: 5px 5px 2px 4px; display: flex; flex-direction: column; }
.notehead { flex: none; height: 22px; line-height: 20px; padding-left: 6px; border: 1px solid #a0a0a0; box-shadow: inset 1px 1px #fff; }
.notebody { flex: 1; min-height: 0; display: flex; flex-direction: column; border: 1px solid #a0a0a0; border-bottom-width: 2px; padding: 1px 2px 5px; }
.editor { flex: 1; min-height: 0; display: flex; background: #fff; border: 1px solid #e3e3e3; border-top: 2px solid #696969; border-left: 2px solid #808080; }
.editor textarea { flex: 1; min-width: 0; resize: none; }
.offscroll { flex: none; width: 17px; background: #f8f8f8; display: flex; flex-direction: column; align-items: center; justify-content: space-between; padding: 17px 0; }
.offscroll path { fill: none; stroke: #bfbfbf; stroke-width: 3; }
.notebody .buttons { margin: 6px 0 0 1px; }
</style>
